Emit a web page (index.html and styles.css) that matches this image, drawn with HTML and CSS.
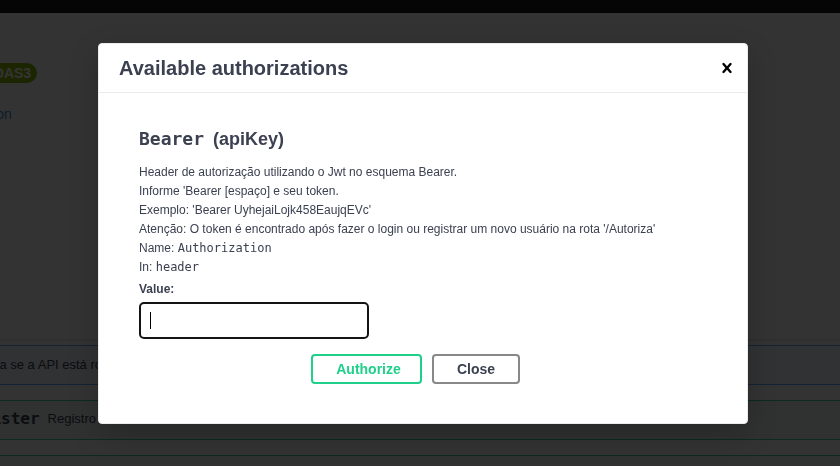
FILE: index.html
```html
<!DOCTYPE html>
<html lang="pt-BR">
<head>
<meta charset="utf-8">
<title>Swagger UI</title>
<link rel="stylesheet" href="styles.css">
</head>
<body>
<div class="page">
  <div class="topbar"></div>
  <div class="info">
    <div class="title-row"><span class="stamp">OAS3</span></div>
    <a class="spec-link">swagger.json</a>
  </div>
  <div class="schemes"></div>
  <div class="opblock get"><span class="summary">Verifica se a API está rodando</span></div>
  <div class="opblock post"><span class="path">/api/register</span><span class="op-desc">Registro de um novo usuário</span></div>
  <div class="opblock post"></div>
</div>
<div class="backdrop"></div>
<div class="modal" role="dialog">
  <div class="modal-header">
    <h3>Available authorizations</h3>
    <button class="close-modal" aria-label="Close">
      <svg width="20" height="20" viewBox="0 0 20 20"><path d="M14.348 14.849a1.2 1.2 0 0 1-1.697 0L10 11.819l-2.651 3.029a1.2 1.2 0 1 1-1.697-1.697l2.758-3.150-2.759-3.152a1.2 1.2 0 1 1 1.697-1.697L10 8.183l2.651-3.031a1.2 1.2 0 1 1 1.697 1.697l-2.758 3.152 2.758 3.150a1.2 1.2 0 0 1 0 1.698z"/></svg>
    </button>
  </div>
  <div class="modal-body">
    <h4><code>Bearer</code>(apiKey)</h4>
    <div class="auth-desc">
      <p>Header de autorização utilizando o Jwt no esquema Bearer.</p>
      <p>Informe 'Bearer [espaço] e seu token.</p>
      <p>Exemplo: 'Bearer UyhejaiLojk458EaujqEVc'</p>
      <p>Atenção: O token é encontrado após fazer o login ou registrar um novo usuário na rota '/Autoriza'</p>
      <p>Name: <code>Authorization</code></p>
      <p>In: <code>header</code></p>
    </div>
    <label class="value-label">Value:</label>
    <div class="field"><input type="text" aria-label="Value"><span class="caret"></span></div>
    <div class="actions">
      <button class="btn authorize">Authorize</button>
      <button class="btn close">Close</button>
    </div>
  </div>
</div>
</body>
</html>
```
FILE: styles.css
```css
html, body {
  margin: 0;
  padding: 0;
  background: #fff;
  overflow: hidden;
  font-family: "Liberation Sans", Arial, sans-serif;
  color: #3b4151;
}

.page {
  width: 840px;
}

.topbar {
  height: 13px;
  background: #1b1b1b;
}

.info {
  height: 256px;
  box-sizing: border-box;
  padding-top: 50px;
}

.title-row {
  display: flex;
  height: 20px;
}

.stamp {
  margin-left: -13px;
  background: #89bf04;
  color: #fff;
  font-weight: 700;
  font-size: 14px;
  line-height: 20px;
  padding: 0 6px;
  border-radius: 57px;
}

.spec-link {
  display: block;
  margin-top: 21px;
  margin-left: -70px;
  font-size: 14px;
  line-height: 20px;
  color: #4990e2;
}

.schemes {
  height: 70px;
  background: #fff;
  box-shadow: 0 1px 2px 0 rgba(0, 0, 0, 0.15);
  margin-bottom: 6px;
}

.opblock {
  display: flex;
  align-items: center;
  height: 40px;
  box-sizing: border-box;
  margin: 0 -10px 15px -10px;
  padding-left: 10px;
  border-radius: 4px;
}

.opblock.get {
  border: 1px solid #61affe;
  background: rgba(97, 175, 254, 0.1);
  padding-bottom: 1px;
}

.opblock.post {
  border: 1px solid #49cc90;
  background: rgba(73, 204, 144, 0.1);
  padding-bottom: 3px;
}

.summary {
  margin-left: -37px;
  font-size: 13px;
  white-space: nowrap;
}

.path {
  margin-left: -86.7px;
  font-family: "DejaVu Sans Mono", monospace;
  font-weight: 700;
  font-size: 16px;
  white-space: nowrap;
}

.op-desc {
  margin-left: 8px;
  font-size: 13px;
  white-space: nowrap;
}

.backdrop {
  position: fixed;
  inset: 0;
  background: rgba(0, 0, 0, 0.8);
}

.modal {
  position: absolute;
  left: 98px;
  top: 43px;
  width: 650px;
  box-sizing: border-box;
  background: #fff;
  border: 1px solid #ebebeb;
  border-radius: 4px;
  box-shadow: 0 10px 30px 0 rgba(0, 0, 0, 0.2);
}

.modal-header {
  display: flex;
  align-items: center;
  justify-content: space-between;
  height: 48px;
  padding: 0 10px 0 20px;
  border-bottom: 1px solid #ebebeb;
}

.modal-header h3 {
  margin: 0;
  font-size: 20px;
  font-weight: 700;
  color: #3b4151;
}

.close-modal {
  display: flex;
  padding: 0;
  border: none;
  background: none;
}

.close-modal svg {
  display: block;
  fill: #000;
}

.modal-body {
  padding: 35px 40px 39px 40px;
}

.modal-body h4 {
  margin: 0 0 13px 0;
  font-size: 18px;
  line-height: 22px;
  font-weight: 700;
  color: #3b4151;
}

.modal-body h4 code {
  font-family: "DejaVu Sans Mono", monospace;
  font-weight: 700;
  margin-right: 9px;
}

.auth-desc p {
  margin: 0;
  font-size: 12px;
  line-height: 19px;
  color: #3b4151;
}

.auth-desc code {
  font-family: "DejaVu Sans Mono", monospace;
  font-size: 12px;
}

.value-label {
  display: block;
  margin-top: 4px;
  font-size: 12px;
  line-height: 16px;
  font-weight: 700;
  color: #3b4151;
}

.field {
  position: relative;
  width: 230px;
  margin-top: 5px;
}

.field input {
  display: block;
  width: 230px;
  height: 37px;
  box-sizing: border-box;
  margin: 0;
  padding: 0 10px;
  border: 2px solid #141414;
  border-radius: 5px;
  background: #fff;
  outline: none;
  font-family: "Liberation Sans", Arial, sans-serif;
  font-size: 14px;
}

.caret {
  position: absolute;
  left: 11px;
  top: 10px;
  width: 1px;
  height: 17px;
  background: #000;
}

.actions {
  display: flex;
  justify-content: center;
  gap: 10px;
  margin-top: 15px;
  padding-right: 15px;
}

.btn {
  height: 30px;
  box-sizing: border-box;
  padding: 0;
  background: #fff;
  border-radius: 4px;
  font-family: "Liberation Sans", Arial, sans-serif;
  font-size: 14px;
  font-weight: 700;
}

.btn.authorize {
  width: 111px;
  padding-left: 4px;
  border: 2px solid #1fd08a;
  color: #1fd08a;
}

.btn.close {
  width: 88px;
  border: 2px solid #888;
  color: #3b4151;
}
```
